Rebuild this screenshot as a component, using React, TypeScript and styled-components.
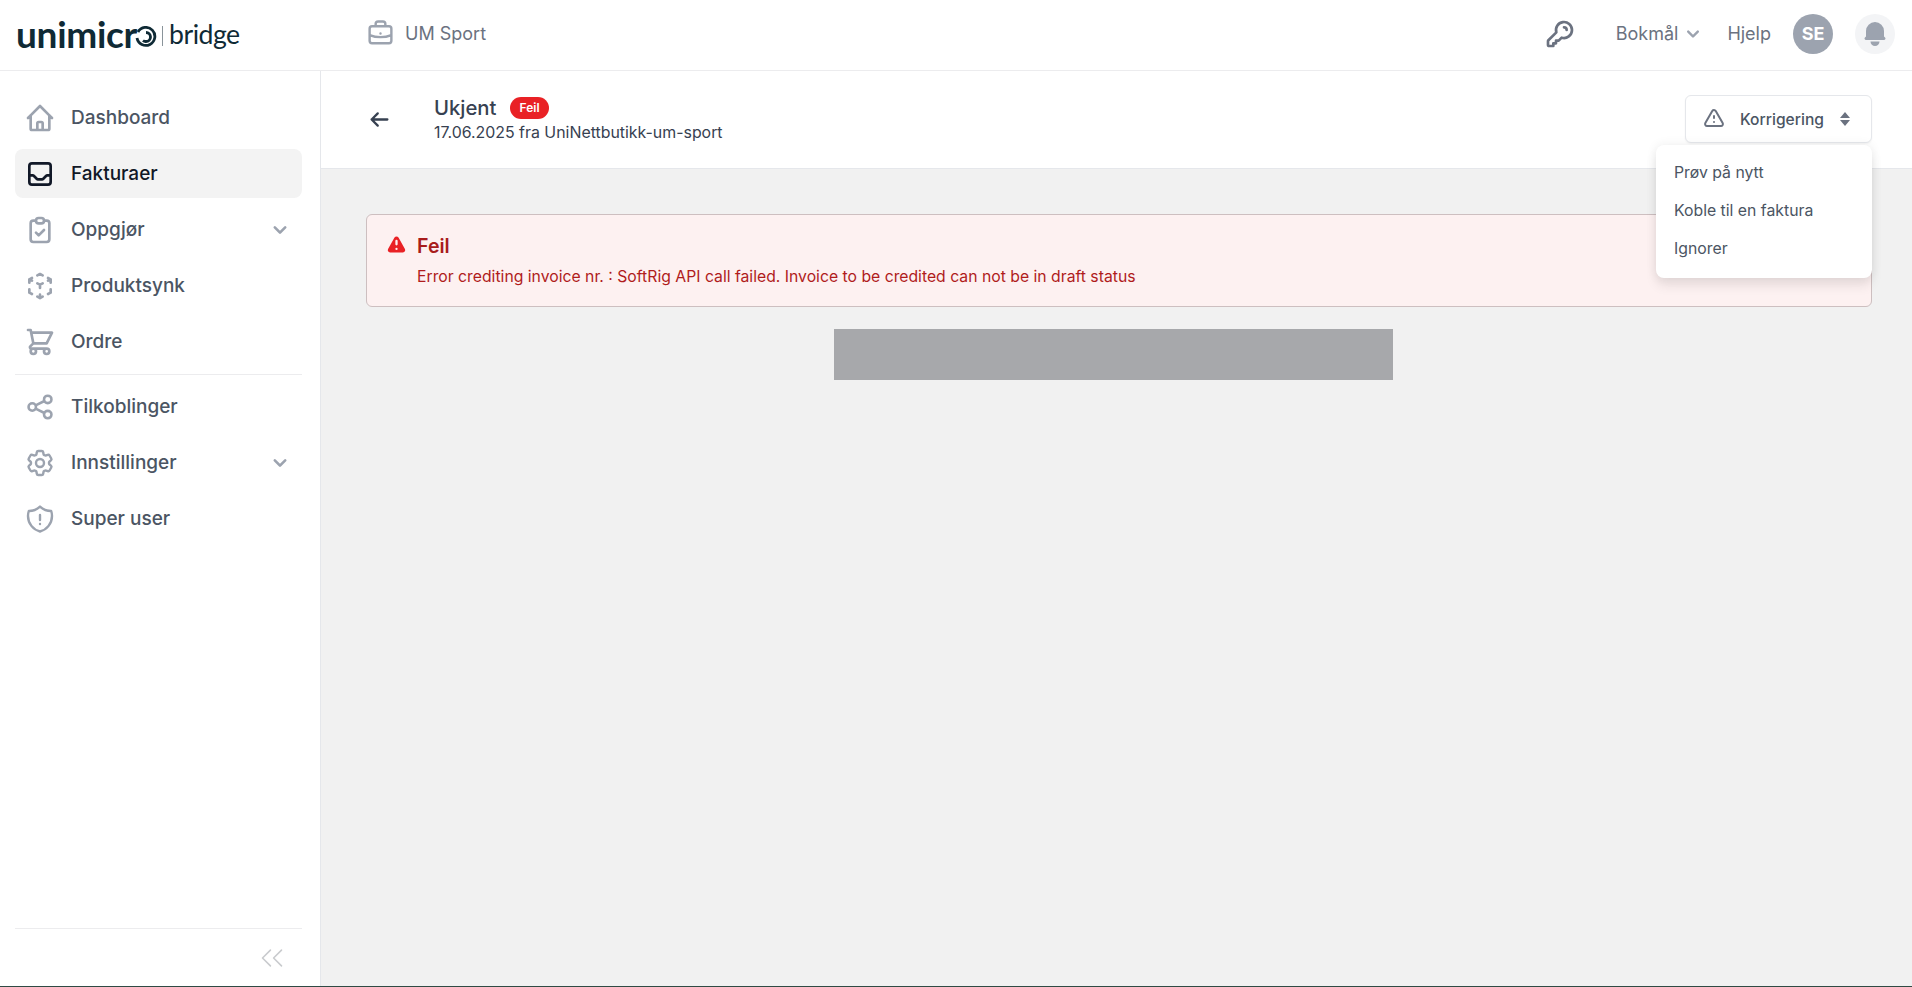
import { ReactNode } from 'react';
import styled, { createGlobalStyle } from 'styled-components';
import {
  HiOutlineHome,
  HiOutlineInbox,
  HiOutlineClipboardCheck,
  HiOutlineCubeTransparent,
  HiOutlineShoppingCart,
  HiOutlineKey,
  HiOutlineBriefcase,
  HiOutlineExclamation,
  HiExclamation,
  HiBell,
  HiChevronDown,
  HiOutlineArrowLeft,
} from 'react-icons/hi';
import { HiOutlineCog6Tooth, HiOutlineShieldExclamation } from 'react-icons/hi2';
import { LuChevronsLeft } from 'react-icons/lu';

const GlobalStyle = createGlobalStyle`
  html, body {
    margin: 0;
    padding: 0;
    height: 100%;
    overflow: hidden;
    background: #fff;
    font-family: Inter, "Liberation Sans", sans-serif;
  }
  #root { height: 100%; }
  * { box-sizing: border-box; }
`;

const Page = styled.div`
  height: 987px;
  display: flex;
  flex-direction: column;
  border-bottom: 1px solid #2f4a44;
`;

const TopBar = styled.header`
  height: 71px;
  flex: none;
  display: flex;
  align-items: center;
  border-bottom: 1px solid #ececee;
  padding: 0 17px 3px 16px;
`;

const Logo = styled.div`
  width: 350px;
  display: flex;
  align-items: center;
  color: #0f2a35;
`;

const LogoWord = styled.span`
  font-family: Lato, sans-serif;
  font-size: 37px;
  font-weight: 700;
  line-height: 1;
  letter-spacing: -0.3px;
`;

const LogoSwirl = styled.svg`
  width: 22px;
  height: 22px;
  margin: 7px 0 0 -2px;
`;

const LogoBar = styled.span`
  width: 1px;
  height: 20px;
  margin: 4px 6px 0 5px;
  background: #8a949a;
`;

const LogoProduct = styled.span`
  font-family: Lato, sans-serif;
  font-size: 26.6px;
  font-weight: 400;
  line-height: 1;
  letter-spacing: -0.5px;
  margin-top: 2px;
`;

const Company = styled.div`
  display: flex;
  align-items: center;
  gap: 10px;
  color: #6b7280;
  font-size: 18px;
  svg {
    color: #9ca3af;
    font-size: 29px;
  }
`;

const TopRight = styled.div`
  margin-left: auto;
  display: flex;
  align-items: center;
  color: #6b7280;
  font-size: 18px;
`;

const KeyIcon = styled(HiOutlineKey)`
  font-size: 32px;
  margin-right: 40px;
  color: #6b7280;
`;

const Language = styled.div`
  display: flex;
  align-items: center;
  gap: 3px;
  margin-right: 22px;
  svg {
    color: #9ca3af;
    font-size: 24px;
  }
`;

const Avatar = styled.div`
  width: 40px;
  height: 40px;
  margin-left: 22px;
  border-radius: 50%;
  background: #9ca3af;
  color: #fff;
  font-weight: 700;
  font-size: 18px;
  display: flex;
  align-items: center;
  justify-content: center;
`;

const BellButton = styled.div`
  width: 40px;
  height: 40px;
  margin-left: 22px;
  border-radius: 50%;
  background: #f3f4f6;
  color: #9ca3af;
  font-size: 30px;
  display: flex;
  align-items: center;
  justify-content: center;
`;

const Body = styled.div`
  flex: 1;
  display: flex;
  min-height: 0;
`;

const Sidebar = styled.aside`
  width: 321px;
  flex: none;
  display: flex;
  flex-direction: column;
  padding: 22px 18px 0 15px;
  border-right: 1px solid #e5e7eb;
`;

const NavGroup = styled.nav`
  display: flex;
  flex-direction: column;
  gap: 7px;
`;

const NavRow = styled.div<{ $active?: boolean }>`
  height: 49px;
  display: flex;
  align-items: center;
  gap: 15px;
  padding: 0 9px;
  border-radius: 8px;
  font-size: 19px;
  font-weight: 500;
  color: ${(p) => (p.$active ? '#111827' : '#4b5563')};
  background: ${(p) => (p.$active ? '#f3f3f3' : 'transparent')};
  > svg:first-child {
    flex: none;
    width: 32px;
    height: 32px;
    color: ${(p) => (p.$active ? '#111827' : '#9ca3af')};
  }
`;

const NavChevron = styled(HiChevronDown)`
  margin-left: auto;
  color: #9ca3af;
  font-size: 26px;
`;

const Divider = styled.div`
  height: 1px;
  margin: 8px 0 7px;
  background: #ececee;
`;

const SidebarFoot = styled.div`
  margin-top: auto;
  height: 58px;
  border-top: 1px solid #ececee;
  display: flex;
  align-items: center;
  justify-content: flex-end;
  padding-right: 11px;
  color: #c9cbce;
  font-size: 38px;
`;

const Main = styled.main`
  flex: 1;
  min-width: 0;
  display: flex;
  flex-direction: column;
  background: #f1f1f1;
`;

const SubHeader = styled.div`
  height: 98px;
  flex: none;
  display: flex;
  align-items: center;
  background: #fff;
  border-bottom: 1px solid #e5e7eb;
  padding: 0 40px 0 48px;
  position: relative;
`;

const BackArrow = styled(HiOutlineArrowLeft)`
  font-size: 21px;
  color: #374151;
  stroke-width: 2.6;
  margin-right: 44px;
`;

const TitleBlock = styled.div`
  display: flex;
  flex-direction: column;
  gap: 2px;
  margin-top: -1px;
`;

const TitleRow = styled.div`
  display: flex;
  align-items: center;
  gap: 14px;
  font-size: 20.3px;
  line-height: 26px;
  font-weight: 500;
  color: #374151;
`;

const Badge = styled.span`
  background: #e92125;
  color: #fff;
  font-size: 12px;
  font-weight: 600;
  line-height: 22px;
  height: 22px;
  padding: 0 9px;
  border-radius: 11px;
`;

const SubTitle = styled.div`
  font-size: 15.9px;
  line-height: 20px;
  color: #374151;
`;

const ActionButton = styled.div`
  margin-left: auto;
  width: 187px;
  height: 48px;
  display: flex;
  align-items: center;
  padding: 0 20px 0 16px;
  background: #fff;
  border: 1px solid #e5e7eb;
  border-radius: 6px;
  box-shadow: 0 1px 2px rgba(0, 0, 0, 0.05);
  color: #4b5563;
  font-size: 15.6px;
  font-weight: 500;
  margin-top: -1px;
  svg:first-child {
    font-size: 24px;
    margin-right: 14px;
    color: #6b7280;
  }
`;

const Sorter = styled.svg`
  width: 12px;
  height: 16px;
  margin-left: auto;
  color: #6b7280;
`;

const Menu = styled.div`
  position: absolute;
  top: 74px;
  right: 40px;
  width: 216px;
  padding: 8px 0 11px;
  background: #fff;
  border-radius: 8px;
  box-shadow: 0 8px 12px rgba(0, 0, 0, 0.08), 0 0 10px 2px rgba(0, 0, 0, 0.05);
  z-index: 2;
`;

const MenuItem = styled.div`
  height: 38px;
  display: flex;
  align-items: center;
  padding: 0 18px;
  font-size: 15.8px;
  color: #4b5563;
`;

const Content = styled.div`
  padding: 45px 40px 0 45px;
  display: flex;
  flex-direction: column;
`;

const Alert = styled.div`
  height: 93px;
  display: flex;
  gap: 9px;
  padding: 19px 18px;
  background: #fdf1f1;
  border: 1px solid #cdbfc0;
  border-radius: 6px;
  svg {
    flex: none;
    font-size: 23px;
    color: #e92125;
    margin-top: 0;
  }
`;

const AlertTitle = styled.div`
  font-size: 19.6px;
  line-height: 24px;
  font-weight: 600;
  color: #a81c1c;
`;

const AlertText = styled.div`
  margin-top: 9px;
  font-size: 15.75px;
  line-height: 20px;
  color: #b01c1c;
`;

const Redacted = styled.div`
  width: 559px;
  height: 51px;
  margin: 22px 0 0 468px;
  background: #a7a8ab;
`;

const ShareIcon = () => (
  <svg viewBox="0 0 24 24" fill="none" stroke="currentColor" strokeWidth="1.9">
    <circle cx="17.8" cy="6.3" r="2.8" />
    <circle cx="6.2" cy="12" r="2.8" />
    <circle cx="17.8" cy="17.7" r="2.8" />
    <path d="M8.7 10.7l6.6-3.2M8.7 13.3l6.6 3.2" />
  </svg>
);

type NavEntry = { icon: ReactNode; label: string; active?: boolean; sub?: boolean };

const primaryNav: NavEntry[] = [
  { icon: <HiOutlineHome />, label: 'Dashboard' },
  { icon: <HiOutlineInbox />, label: 'Fakturaer', active: true },
  { icon: <HiOutlineClipboardCheck />, label: 'Oppgjør', sub: true },
  { icon: <HiOutlineCubeTransparent />, label: 'Produktsynk' },
  { icon: <HiOutlineShoppingCart />, label: 'Ordre' },
];

const secondaryNav: NavEntry[] = [
  { icon: <ShareIcon />, label: 'Tilkoblinger' },
  { icon: <HiOutlineCog6Tooth strokeWidth={1.8} />, label: 'Innstillinger', sub: true },
  { icon: <HiOutlineShieldExclamation strokeWidth={1.8} />, label: 'Super user' },
];

const renderNav = (items: NavEntry[]) => (
  <NavGroup>
    {items.map((item) => (
      <NavRow key={item.label} $active={item.active}>
        {item.icon}
        {item.label}
        {item.sub && <NavChevron />}
      </NavRow>
    ))}
  </NavGroup>
);

const App = () => {
  return (
    <Page>
      <GlobalStyle />
      <TopBar>
        <Logo>
          <LogoWord>unimicr</LogoWord>
          <LogoSwirl viewBox="0 0 22 22" fill="none" stroke="currentColor" strokeWidth="2.8">
            <path d="M3 6a9 9 0 1 1-1 6" />
            <path d="M8 14.5a4 4 0 0 0 3 1 4.5 4.5 0 0 0 0-9" />
          </LogoSwirl>
          <LogoBar />
          <LogoProduct>bridge</LogoProduct>
        </Logo>
        <Company>
          <HiOutlineBriefcase />
          UM Sport
        </Company>
        <TopRight>
          <KeyIcon />
          <Language>
            Bokmål
            <HiChevronDown />
          </Language>
          Hjelp
          <Avatar>SE</Avatar>
          <BellButton>
            <HiBell />
          </BellButton>
        </TopRight>
      </TopBar>
      <Body>
        <Sidebar>
          {renderNav(primaryNav)}
          <Divider />
          {renderNav(secondaryNav)}
          <SidebarFoot>
            <LuChevronsLeft strokeWidth={1} />
          </SidebarFoot>
        </Sidebar>
        <Main>
          <SubHeader>
            <BackArrow />
            <TitleBlock>
              <TitleRow>
                Ukjent
                <Badge>Feil</Badge>
              </TitleRow>
              <SubTitle>17.06.2025 fra UniNettbutikk-um-sport</SubTitle>
            </TitleBlock>
            <ActionButton>
              <HiOutlineExclamation />
              Korrigering
              <Sorter viewBox="0 0 12 16" fill="currentColor">
                <path d="M6 1 11 7H1zM6 15 1 9h10z" />
              </Sorter>
            </ActionButton>
            <Menu>
              <MenuItem>Prøv på nytt</MenuItem>
              <MenuItem>Koble til en faktura</MenuItem>
              <MenuItem>Ignorer</MenuItem>
            </Menu>
          </SubHeader>
          <Content>
            <Alert>
              <HiExclamation />
              <div>
                <AlertTitle>Feil</AlertTitle>
                <AlertText>
                  Error crediting invoice nr. : SoftRig API call failed. Invoice to be credited can not be in draft status
                </AlertText>
              </div>
            </Alert>
            <Redacted />
          </Content>
        </Main>
      </Body>
    </Page>
  );
};

export default App;
